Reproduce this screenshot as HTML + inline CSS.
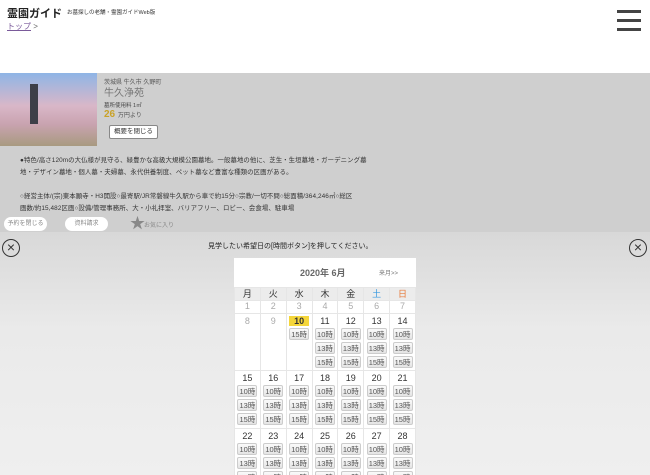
<!DOCTYPE html>
<html style="overflow:hidden;width:650px;height:475px"><head><meta charset="utf-8"><style>
*{margin:0;padding:0;box-sizing:border-box}
body{width:650px;height:475px;overflow:hidden;background:#cfcfcf;font-family:"Liberation Sans","Noto Sans CJK JP",sans-serif;position:relative;color:#333}
.hdr{position:absolute;left:0;top:0;width:650px;height:73px;background:#fff}
.abs{position:absolute;white-space:nowrap}
.cal{position:absolute;left:234px;top:258px;width:182px;height:217px;background:#fff;overflow:hidden}
table{border-collapse:collapse;width:182px;table-layout:fixed}
td,th{border:1px solid #e6e6e6;text-align:center;vertical-align:top;font-size:9px;font-weight:normal}
th{background:#ececec;height:13px;line-height:12px}
.b{display:block;margin:2px auto 0;width:20px;height:12px;line-height:11px;font-size:7.5px;border:1px solid #ccc;border-radius:2px;background:linear-gradient(#fafafa,#e4e4e4);color:#555}
.g{color:#aaa}
.x{position:absolute;width:18px;height:18px;border:1.5px solid #333;border-radius:50%;font-size:14px;line-height:14px;text-align:center;color:#333}
.btn{position:absolute;height:14px;border-radius:7px;background:#fff;font-size:6px;line-height:14px;text-align:center;color:#888}
</style></head><body>
<div class="hdr"></div>
<div class="abs" style="left:7px;top:5px;font-size:11px;font-weight:bold;color:#222">霊園ガイド</div>
<div class="abs" style="left:67px;top:8px;font-size:5.5px;color:#333">お墓探しの老舗・霊園ガイドWeb版</div>
<div class="abs" style="left:7px;top:21px;font-size:8px;color:#666"><span style="color:#7a5a9a;text-decoration:underline">トップ</span> &gt;</div>
<div class="abs" style="left:617px;top:10px;width:24px;height:3px;background:#444"></div>
<div class="abs" style="left:617px;top:19px;width:24px;height:3px;background:#444"></div>
<div class="abs" style="left:617px;top:28px;width:24px;height:3px;background:#444"></div>
<div class="abs" style="left:0;top:73px;width:97px;height:73px;background:linear-gradient(180deg,#8fb5e6 0%,#d9b7c8 45%,#c9a3b0 70%,#a89a80 100%)"></div>
<div class="abs" style="left:30px;top:84px;width:8px;height:40px;background:#3d3f48"></div>
<div class="abs" style="left:104px;top:77px;font-size:6px;color:#555">茨城県 牛久市 久野町</div>
<div class="abs" style="left:104px;top:84px;font-size:10px;color:#777">牛久浄苑</div>
<div class="abs" style="left:104px;top:101px;font-size:5.5px;color:#444">墓所使用料 1㎡</div>
<div class="abs" style="left:104px;top:109px;font-size:10px;font-weight:bold;color:#c9a227">26 <span style="font-size:6px;color:#555;font-weight:normal">万円より</span></div>
<div class="abs" style="left:109px;top:125px;width:49px;height:14px;border:1px solid #888;border-radius:2px;background:#fff;font-size:6.5px;line-height:12px;text-align:center">概要を閉じる</div>
<div class="abs" style="left:20px;top:155px;font-size:6.4px;letter-spacing:0.1px;line-height:12px;color:#333">●特色/高さ120mの大仏様が見守る、緑豊かな高級大規模公園墓地。一般墓地の他に、芝生・生垣墓地・ガーデニング墓<br>地・デザイン墓地・個人墓・夫婦墓、永代供養制度、ペット墓など豊富な種類の区画がある。<br><br>○経営主体/(宗)東本願寺・H3開設○最寄駅/JR常磐線牛久駅から車で約15分○宗教/一切不問○総面積/364,246㎡○総区<br>画数/約15,482区画○設備/管理事務所、大・小礼拝室、バリアフリー、ロビー、会食場、駐車場</div>
<div class="btn" style="left:4px;top:217px;width:43px">予約を閉じる</div>
<div class="btn" style="left:65px;top:217px;width:43px">資料請求</div>
<div class="abs" style="left:130px;top:212px;font-size:15px;color:#888">★</div>
<div class="abs" style="left:144px;top:220px;font-size:6px;color:#888">お気に入り</div>
<div class="abs" style="left:0;top:232px;width:650px;height:243px;background:linear-gradient(#d8d8d8,#eaeaea 40%,#efefef)"></div>
<div class="x" style="left:2px;top:239px">×</div>
<div class="x" style="left:629px;top:239px">×</div>
<div class="abs" style="left:208px;top:241px;font-size:7px;color:#222">見学したい希望日の[時間ボタン]を押してください。</div>
<div class="cal">
<div style="height:29px;position:relative"><span class="abs" style="left:66px;top:8px;font-size:9px;font-weight:bold;color:#666">2020年 6月</span><span class="abs" style="left:145px;top:10px;font-size:6px;color:#777">来月&gt;&gt;</span></div>
<table>
<tr><th>月</th><th>火</th><th>水</th><th>木</th><th>金</th><th style="color:#3a9ae0">土</th><th style="color:#e77a3a">日</th></tr>
<tr style="height:13px"><td class="g">1</td><td class="g">2</td><td class="g">3</td><td class="g">4</td><td class="g">5</td><td class="g">6</td><td class="g">7</td></tr>
<tr style="height:57px"><td class="g" style="padding-top:2px">8</td><td class="g" style="padding-top:2px">9</td><td style="padding-top:2px"><span style="display:block;width:20px;margin:0 auto;background:#f5d63a;font-weight:bold">10</span><span class="b">15時</span></td>
<td style="padding-top:2px">11<span class="b">10時</span><span class="b">13時</span><span class="b">15時</span></td>
<td style="padding-top:2px">12<span class="b">10時</span><span class="b">13時</span><span class="b">15時</span></td>
<td style="padding-top:2px">13<span class="b">10時</span><span class="b">13時</span><span class="b">15時</span></td>
<td style="padding-top:2px">14<span class="b">10時</span><span class="b">13時</span><span class="b">15時</span></td></tr>
<tr style="height:58px"><td style="padding-top:2px">15<span class="b">10時</span><span class="b">13時</span><span class="b">15時</span></td><td style="padding-top:2px">16<span class="b">10時</span><span class="b">13時</span><span class="b">15時</span></td><td style="padding-top:2px">17<span class="b">10時</span><span class="b">13時</span><span class="b">15時</span></td><td style="padding-top:2px">18<span class="b">10時</span><span class="b">13時</span><span class="b">15時</span></td><td style="padding-top:2px">19<span class="b">10時</span><span class="b">13時</span><span class="b">15時</span></td><td style="padding-top:2px">20<span class="b">10時</span><span class="b">13時</span><span class="b">15時</span></td><td style="padding-top:2px">21<span class="b">10時</span><span class="b">13時</span><span class="b">15時</span></td></tr>
<tr style="height:58px"><td style="padding-top:2px">22<span class="b">10時</span><span class="b">13時</span><span class="b">15時</span></td><td style="padding-top:2px">23<span class="b">10時</span><span class="b">13時</span><span class="b">15時</span></td><td style="padding-top:2px">24<span class="b">10時</span><span class="b">13時</span><span class="b">15時</span></td><td style="padding-top:2px">25<span class="b">10時</span><span class="b">13時</span><span class="b">15時</span></td><td style="padding-top:2px">26<span class="b">10時</span><span class="b">13時</span><span class="b">15時</span></td><td style="padding-top:2px">27<span class="b">10時</span><span class="b">13時</span><span class="b">15時</span></td><td style="padding-top:2px">28<span class="b">10時</span><span class="b">13時</span><span class="b">15時</span></td></tr>
</table></div>
</body></html>
